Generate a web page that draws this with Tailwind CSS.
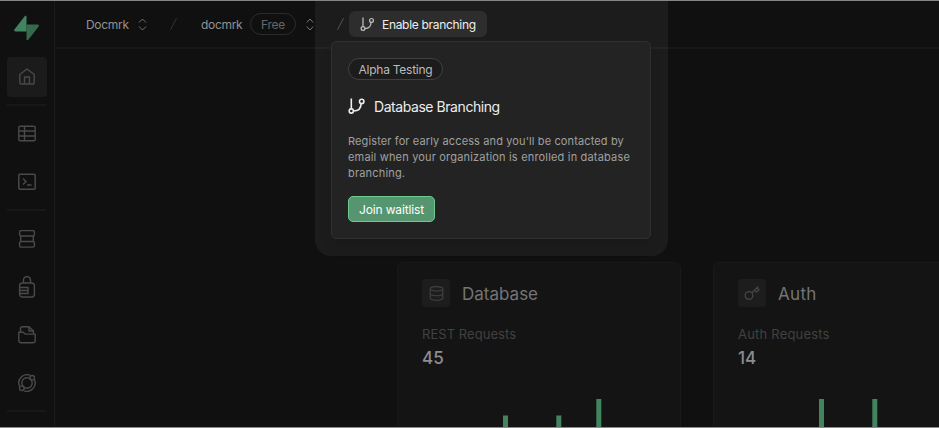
<!DOCTYPE html>
<html lang="en">
<head>
<meta charset="utf-8">
<title>Docmrk</title>
<script src="https://cdn.jsdelivr.net/npm/@tailwindcss/browser@4"></script>
</head>
<body class="h-[428px] w-[939px] overflow-hidden bg-black">
<div class="relative flex h-[428px] w-[939px] overflow-hidden border-y border-t-[#858585] border-b-[#8b8b8b] bg-[#101010] font-['Inter',sans-serif] whitespace-nowrap">

  <!-- Sidebar -->
  <nav class="flex w-[55px] shrink-0 flex-col border-r border-[#1b1b1b] pl-[7px] text-[#4a4a4a]">
    <svg class="mt-[14px] ml-[7px] h-[26px] w-[25px] shrink-0" viewBox="0 0 25 26"><path d="M12.500 9.500H23.500c1.400 0 1.800 1.300 1 2.300L14.300 24.800c-.6.800-1.800.4-1.800-.5z" fill="#356a4c"/><path d="M12.500 16.500H1.500C.1 16.500-.2 15.200.6 14.200L10.700 1.200c.6-.8 1.800-.4 1.800.5z" fill="#438460"/></svg>
    <div class="mt-[16px] flex size-10 shrink-0 items-center justify-center rounded bg-[#1b1b1b]">
      <svg class="size-[18px]" viewBox="0 0 18 18" fill="none" stroke="currentColor" stroke-width="1.400" stroke-linejoin="round"><path d="M1.800 6.500 9 1l7.200 5.500v8q0 1.500-1.500 1.500H3.300q-1.500 0-1.500-1.500zM6.500 16V9h5v7"/></svg>
    </div>
    <div class="mt-[7px] h-[2px] w-[39px] shrink-0 bg-[#181818]"></div>
    <div class="mt-2 flex h-10 w-10 shrink-0 items-center justify-center">
      <svg class="size-[18px]" viewBox="0 0 18 18" fill="none" stroke="currentColor" stroke-width="1.400"><rect x=".8" y="1.300" width="16.400" height="14.400" rx="1.200"/><path d="M1 6h16M1 11h16M6.500 1.500v14"/></svg>
    </div>
    <div class="mt-2 flex h-10 w-10 shrink-0 items-center justify-center">
      <svg class="size-[18px]" viewBox="0 0 18 18" fill="none" stroke="currentColor" stroke-width="1.500"><rect x=".8" y="1.300" width="16.400" height="14.900" rx="1.200"/><path d="m5 5.500 3 3L5 11.500M9 12h4.500"/></svg>
    </div>
    <div class="mt-[7px] h-[2px] w-[39px] shrink-0 bg-[#181818]"></div>
    <div class="mt-2 flex h-10 w-10 shrink-0 items-center justify-center">
      <svg class="size-[18px]" viewBox="0 0 18 18" fill="none" stroke="currentColor" stroke-width="1.400"><rect x="1.600" y=".6" width="14.800" height="5.400" rx="1.500"/><rect x="1.600" y="11.500" width="14.800" height="5.600" rx="1.500"/><path d="M2.700 6v5.500M15.300 6v5.500"/></svg>
    </div>
    <div class="mt-2 flex h-10 w-10 shrink-0 items-center justify-center">
      <svg class="h-[22px] w-[18px]" viewBox="0 0 18 22" fill="none" stroke="currentColor" stroke-width="1.400"><rect x="1.600" y="7" width="14.800" height="14" rx="2.800"/><path d="M5.500 7V4a3.500 3.500 0 0 1 7 0v3M1.600 11.500H10v6H1.600M1.600 14.500H10"/></svg>
    </div>
    <div class="mt-2 flex h-10 w-10 shrink-0 items-center justify-center">
      <svg class="size-[18px]" viewBox="0 0 18 18" fill="none" stroke="currentColor" stroke-width="1.400" stroke-linejoin="round"><path d="M.8 14.500V6.300h4.400l2 1.800h10v6.400q0 2.300-2.300 2.300H3.100q-2.300 0-2.300-2.300zM2.500 6.300V2.500q0-1.700 1.700-1.700h6.800l4.500 4.200v3M11 1v4h4"/></svg>
    </div>
    <div class="mt-2 flex h-10 w-10 shrink-0 items-center justify-center">
      <svg class="size-[18px]" viewBox="0 0 18 18" fill="none" stroke="currentColor" stroke-width="1.400"><path d="M12 1.200A8.300 8.300 0 0 0 1.500 12.200M6 16.800A8.300 8.300 0 0 0 16.500 5.800"/><circle cx="9" cy="9" r="5.200"/><circle cx="14.200" cy="3.800" r="2.300"/><circle cx="3.800" cy="14.200" r="2.300"/></svg>
    </div>
    <div class="mt-[7px] h-[2px] w-[39px] shrink-0 bg-[#181818]"></div>
  </nav>

  <main class="flex min-w-0 flex-1 flex-col">
    <!-- Breadcrumb header -->
    <header class="relative z-20 flex h-12 shrink-0 items-center border-b-2 border-white/3 pl-[31px] text-[12px] text-[#929292]">
      <span class="w-[52px] pt-px tracking-[-.3px]">Docmrk</span>
      <svg class="h-[13px] w-[9px]" viewBox="0 0 9 13" fill="none" stroke="#707070" stroke-width="1"><path d="m1 4.500 3.500-3.500L8 4.500M1 8.500 4.500 12 8 8.500"/></svg>
      <svg class="ml-[23px] h-3 w-[7px]" viewBox="0 0 7 12" stroke="#333"><path d="M.5 11.800 6.500.2"/></svg>
      <span class="ml-[24px] w-[49px] pt-px tracking-[-.3px]">docmrk</span>
      <span class="flex h-[22px] w-[46px] items-center justify-center rounded-full border border-[#2a2c2b] pt-px text-[12px] tracking-[-.2px] text-[#64686a]">Free</span>
      <svg class="ml-[10px] h-[13px] w-[8px]" viewBox="0 0 8 13" fill="none" stroke="#777" stroke-width="1"><path d="m.8 4.500 3.200-3.500 3.200 3.500M.8 8.500 4 12l3.200-3.500"/></svg>
      <svg class="ml-[23px] h-3 w-[7px]" viewBox="0 0 7 12" stroke="#555"><path d="M.5 11.800 6.500.2"/></svg>
      <button class="ml-[5px] flex h-[26px] w-[138px] items-center rounded-md bg-[#2d2d2d] pl-[11px] text-[12px] text-[#ededed]">
        <svg class="h-[14px] w-[14px]" viewBox="0 0 14 14" fill="none" stroke="#c4c4c4" stroke-width="1.200"><path d="M3 .5v9M5 11.500c4.600 0 6-3 6-6.200"/><circle cx="3" cy="11.500" r="1.900"/><circle cx="11.500" cy="3.400" r="1.900"/></svg>
        <span class="ml-2 pt-px tracking-[-.31px]">Enable branching</span>
      </button>
    </header>

    <!-- Usage cards -->
    <section class="mt-[213px] ml-[342px] flex w-[610px] flex-1 gap-[32px]">
      <article class="h-[200px] w-[284px] shrink-0 rounded-md border border-[#191919] bg-[#141414] pt-4 pl-6">
        <div class="flex h-7 items-center">
          <span class="flex size-7 items-center justify-center rounded bg-[#1d1d1d]">
            <svg class="h-[15px] w-[15px]" viewBox="0 0 15 15" fill="none" stroke="#424242" stroke-width="1.100"><ellipse cx="7.500" cy="2.800" rx="6.300" ry="2.200"/><path d="M1.200 2.800v9.200c0 3 12.600 3 12.600 0V2.800M1.200 7.500c0 3 12.600 3 12.600 0"/></svg>
          </span>
          <h2 class="ml-3 pt-[2px] text-[17px] leading-7 text-[#747474]">Database</h2>
        </div>
        <p class="mt-[15px] text-[13px] leading-6 tracking-[.05px] text-[#414141]">REST Requests</p>
        <p class="text-[17px] leading-6 font-medium text-[#8d8d8d]">45</p>
        <svg class="mt-[29px] ml-[81px] h-[32px] w-[100px]" viewBox="0 0 100 32" fill="#438460"><path d="M0 16.500h5v16H0zM53.300 16.500h5v16h-5zM93.300 0h5v32h-5z"/></svg>
      </article>
      <article class="h-[200px] w-[284px] shrink-0 rounded-md border border-[#191919] bg-[#141414] pt-4 pl-6">
        <div class="flex h-7 items-center">
          <span class="flex size-7 items-center justify-center rounded bg-[#1d1d1d]">
            <svg class="h-[16px] w-[16px]" viewBox="0 0 16 16" fill="none" stroke="#484848" stroke-width="1.200"><circle cx="5" cy="10.500" r="3.900"/><path d="m8 7.700 6.300-6.200M10.500 5.200l2 1.900 2.500-2.400-1.900-2"/></svg>
          </span>
          <h2 class="ml-3 pt-[2px] text-[17px] leading-7 tracking-[.3px] text-[#747474]">Auth</h2>
        </div>
        <p class="mt-[15px] text-[13px] leading-6 tracking-[.2px] text-[#414141]">Auth Requests</p>
        <p class="text-[17px] leading-6 font-medium text-[#8d8d8d]">14</p>
        <svg class="mt-[29px] ml-[81px] h-[32px] w-[100px]" viewBox="0 0 100 32" fill="#438460"><path d="M0 0h5v32H0zM53.300 0h5v32h-5z"/></svg>
      </article>
    </section>
  </main>

  <!-- Spotlight around the open popover -->
  <div class="absolute top-0 left-[315px] z-10 h-[255px] w-[353px] rounded-b-[16px] bg-[#1c1c1c]"></div>
  <aside class="absolute top-[40px] left-[331px] z-30 flex h-[198px] w-[320px] flex-col items-start rounded-[5px] border border-[#303030] bg-[#232323] pt-4 pl-4 shadow-lg shadow-black/10">
    <span class="flex h-[22px] w-[95px] items-center justify-center rounded-full border border-[#404040] bg-[#1c1c1c] pt-px text-[12px] tracking-[-.25px] text-[#bbb]">Alpha Testing</span>
    <div class="mt-4 flex h-5 items-center">
      <svg class="h-[16px] w-[17px]" viewBox="0 0 17 16" fill="none" stroke="#ededed" stroke-width="1.600"><path d="M3.300 .5v10.500M5.500 13c5.400 0 7.600-3.500 7.600-7.500"/><circle cx="3.300" cy="13" r="2.100"/><circle cx="13.700" cy="3.400" r="2.200"/></svg>
      <h3 class="ml-[9px] text-[14px] tracking-[-.44px] text-[#ededed]">Database Branching</h3>
    </div>
    <p class="mt-[17px] text-[11px] leading-4 text-[#a0a0a0]"><span class="tracking-[.12px]">Register for early access and you'll be contacted by</span><br><span class="tracking-[.18px]">email when your organization is enrolled in database</span><br><span class="tracking-[.18px]">branching.</span></p>
    <button class="mt-[15px] flex h-[26px] w-[87px] items-center justify-center rounded-[5px] border border-[#6bcb91] bg-[#559670] pt-px text-[12px] tracking-[-.15px] text-white">Join waitlist</button>
  </aside>
</div>
</body>
</html>
